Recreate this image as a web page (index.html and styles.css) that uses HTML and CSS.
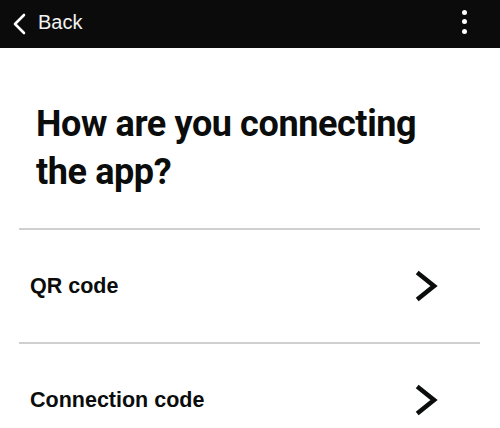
FILE: index.html
```html
<!DOCTYPE html>
<html lang="en">
<head>
  <meta charset="UTF-8" />
  <meta name="viewport" content="width=device-width, initial-scale=1.0" />
  <title>Connect the app</title>
  <link rel="stylesheet" href="styles.css">
</head>
<body>

  <header class="top-bar">
    <a class="back-link" href="#">
      <svg class="back-icon" width="14" height="22" viewBox="0 0 14 22">
        <path d="M12 2 L3 11 L12 20" fill="none" stroke="#fff" stroke-width="2.6" stroke-linecap="round" stroke-linejoin="round"/>
      </svg>
      <span>Back</span>
    </a>
    <div class="menu-dots">
      <span></span>
      <span></span>
      <span></span>
    </div>
  </header>

  <main class="content">
    <h1 class="question">How are you connecting the app?</h1>

    <ul class="options">
      <li class="option">
        <span class="option-label">QR code</span>
        <svg class="chevron" width="24" height="32" viewBox="0 0 24 32">
          <path d="M4 4 L19 16 L4 28" fill="none" stroke="#0b0c0c" stroke-width="4.6" stroke-linecap="square" stroke-linejoin="miter"/>
        </svg>
      </li>
      <li class="option">
        <span class="option-label">Connection code</span>
        <svg class="chevron" width="24" height="32" viewBox="0 0 24 32">
          <path d="M4 4 L19 16 L4 28" fill="none" stroke="#0b0c0c" stroke-width="4.6" stroke-linecap="square" stroke-linejoin="miter"/>
        </svg>
      </li>
    </ul>
  </main>

</body>
</html>
```

FILE: styles.css
```css
body {
  margin: 0;
  background: #fff;
  color: #0b0c0c;
  font-family: 'Liberation Sans', Arial, sans-serif;
}

.top-bar {
  height: 48px;
  background-color: #0b0b0b;
  display: flex;
  align-items: center;
  justify-content: space-between;
  padding: 0 33px 0 12px;
}

.back-link {
  display: flex;
  align-items: center;
  gap: 12px;
  margin-top: -3px;
  color: #f2f2f2;
  text-decoration: none;
  font-size: 20px;
}

.back-icon {
  display: block;
  margin-top: 2px;
}

.menu-dots {
  display: flex;
  flex-direction: column;
  gap: 4.5px;
  margin-top: -5px;
}

.menu-dots span {
  width: 5px;
  height: 5px;
  border-radius: 50%;
  background: #fff;
}

.content {
  padding: 0 20px 0 19px;
}

.question {
  max-width: 400px;
  margin: 52px 0 32px 17px;
  font-family: Roboto, 'Liberation Sans', sans-serif;
  font-size: 36px;
  line-height: 48px;
  font-weight: bold;
  letter-spacing: -0.4px;
}

.options {
  list-style: none;
  margin: 0;
  padding: 0;
}

.option {
  display: flex;
  align-items: center;
  justify-content: space-between;
  height: 112px;
  padding: 0 41px 0 11px;
  border-top: 2px solid #d0d0d0;
}

.option-label {
  font-size: 21.5px;
  font-weight: bold;
}

.chevron {
  display: block;
}
```
